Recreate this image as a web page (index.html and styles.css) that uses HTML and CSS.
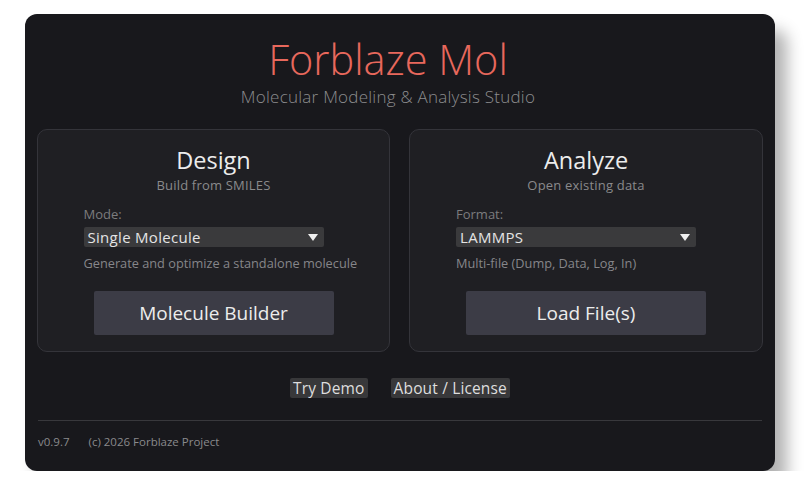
FILE: index.html
```html
<!DOCTYPE html>
<html>
<head>
<meta charset="utf-8">
<link rel="stylesheet" href="styles.css">
</head>
<body>
<div class="dialog">
  <h1 class="title">Forblaze Mol</h1>
  <div class="subtitle">Molecular Modeling &amp; Analysis Studio</div>
  <div class="cards">
    <div class="card">
      <div class="card-title">Design</div>
      <div class="card-sub">Build from SMILES</div>
      <div class="field">
        <div class="label">Mode:</div>
        <div class="select"><span>Single Molecule</span><span class="caret"></span></div>
        <div class="help">Generate and optimize a standalone molecule</div>
      </div>
      <div class="btn">Molecule Builder</div>
    </div>
    <div class="card">
      <div class="card-title">Analyze</div>
      <div class="card-sub">Open existing data</div>
      <div class="field">
        <div class="label">Format:</div>
        <div class="select"><span>LAMMPS</span><span class="caret"></span></div>
        <div class="help">Multi-file (Dump, Data, Log, In)</div>
      </div>
      <div class="btn">Load File(s)</div>
    </div>
  </div>
  <div class="links">
    <span class="link">Try Demo</span>
    <span class="link">About / License</span>
  </div>
  <div class="divider"></div>
  <div class="footer">
    <span>v0.9.7</span>
    <span>(c) 2026 Forblaze Project</span>
  </div>
</div>
</body>
</html>
```

FILE: styles.css
```css
html, body {
  margin: 0;
  padding: 0;
  background: #ffffff;
}
body {
  font-family: "Open Sans", "Noto Sans", sans-serif;
}
.dialog {
  box-sizing: border-box;
  width: 750px;
  margin: 14px 0 0 25px;
  padding: 21px 12px 21px;
  background: #18181c;
  border-radius: 12px;
  box-shadow: 12px 16px 16px rgba(0, 0, 0, 0.3);
  display: flex;
  flex-direction: column;
}
.title {
  margin: 0 24px 0 0;
  text-align: center;
  font-weight: 300;
  font-size: 41.5px;
  line-height: 48px;
  color: #e8685c;
}
.subtitle {
  margin: 2px 24px 0 0;
  text-align: center;
  font-size: 17px;
  letter-spacing: 0.25px;
  line-height: 24px;
  color: #8c8c8e;
  font-weight: 300;
}
.cards {
  display: grid;
  grid-template-columns: 353px 354px;
  gap: 19px;
  margin-top: 20px;
}
.card {
  background: #1f1f23;
  border: 1px solid #34343a;
  border-radius: 10px;
  padding: 15px 0 16px;
  display: flex;
  flex-direction: column;
  align-items: center;
}
.card-title {
  font-size: 23.5px;
  line-height: 30px;
  color: #ececec;
  font-weight: 400;
}
.card-sub {
  font-size: 13px;
  letter-spacing: 0.2px;
  line-height: 18px;
  margin-top: 1px;
  color: #8a8a8c;
}
.field {
  width: 260px;
  margin-top: 11px;
  display: flex;
  flex-direction: column;
}
.label {
  font-size: 13px;
  line-height: 18px;
  color: #7c7c7e;
}
.select {
  width: 240px;
  height: 20px;
  margin-top: 4px;
  box-sizing: border-box;
  padding: 0 6px 0 4px;
  background: #3a3a3c;
  border-radius: 2px;
  display: flex;
  align-items: center;
  justify-content: space-between;
  font-size: 15px;
  letter-spacing: 0.3px;
  color: #e4e4e4;
}
.caret {
  width: 0;
  height: 0;
  border-left: 5px solid transparent;
  border-right: 5px solid transparent;
  border-top: 7px solid #f0f0f0;
}
.help {
  font-size: 12.75px;
  line-height: 18px;
  margin-top: 7px;
  color: #86868a;
  white-space: nowrap;
}
.btn {
  width: 240px;
  height: 44px;
  margin-top: 19px;
  background: #3c3c46;
  border-radius: 2px;
  display: flex;
  align-items: center;
  justify-content: center;
  font-size: 19px;
  color: #ececec;
}
.links {
  display: flex;
  justify-content: center;
  gap: 23px;
  margin-top: 26px;
}
.link {
  height: 20px;
  line-height: 20px;
  padding: 0 3px;
  background: #38383a;
  border-radius: 2px;
  font-size: 15.5px;
  letter-spacing: 0.15px;
  color: #dedede;
}
.divider {
  height: 1px;
  background: #38383c;
  margin: 22px 1px 0;
}
.footer {
  display: flex;
  gap: 19px;
  margin: 13px 1px 0;
  font-size: 11.5px;
  line-height: 16px;
  color: #8a8a8c;
}
```
